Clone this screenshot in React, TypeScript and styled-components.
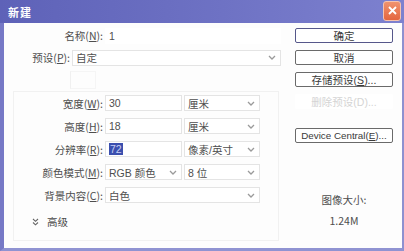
import React from "react";
import styled, { createGlobalStyle } from "styled-components";

const GlobalStyle = createGlobalStyle`
  html, body { margin: 0; padding: 0; background: #fff; }
  body {
    font-family: "Liberation Sans", "Noto Sans CJK SC", sans-serif;
    font-size: 11px;
    color: #4a4a4a;
  }
`;

const Window = styled.div`
  width: 404px;
  height: 251px;
  display: flex;
  flex-direction: column;
  box-sizing: border-box;
  overflow: hidden;
`;

const TitleBar = styled.div`
  height: 23px;
  flex: none;
  display: flex;
  align-items: center;
  justify-content: space-between;
  padding: 0 3px 0 8px;
  background: linear-gradient(90deg, #5e62b8 0%, #6e72c4 55%, #7d81cf 100%);
`;

const Title = styled.span`
  color: #fff;
  font-weight: bold;
  font-size: 11px;
  letter-spacing: 1px;
  font-family: "Noto Sans CJK SC", sans-serif;
`;

const CloseButton = styled.div`
  width: 16px;
  height: 18px;
  border-radius: 3px;
  background: linear-gradient(180deg, #f0936e 0%, #e4663f 100%);
  border: 1px solid #f6c3ae;
  display: flex;
  align-items: center;
  justify-content: center;
  margin-top: -2px;
`;

const Body = styled.div`
  flex: 1;
  display: flex;
  background: #fdfdfd;
  border-left: 4px solid #7679c6;
  border-right: 2px solid #8e91d0;
  border-bottom: 3px solid #9093d2;
`;

const LeftPane = styled.div`
  width: 277px;
  display: flex;
  flex-direction: column;
  padding-top: 4px;
`;

const RightPane = styled.div`
  flex: 1;
  display: flex;
  flex-direction: column;
  padding: 5px 0 0 14px;
`;

const TopRow = styled.div<{ $labelWidth: number }>`
  display: grid;
  grid-template-columns: ${(p) => p.$labelWidth}px 1fr;
  column-gap: 2px;
  align-items: center;
  height: 17px;
  margin-bottom: 5px;
`;

const Label = styled.span`
  text-align: right;
  white-space: nowrap;
  font-family: "Noto Sans CJK SC", sans-serif;
  font-size: 10.5px;
  color: #4e4e4e;
`;

const Key = styled.span`
  text-decoration: underline;
`;

const Field = styled.div<{ $bordered?: boolean }>`
  height: 16px;
  box-sizing: border-box;
  display: flex;
  align-items: center;
  justify-content: space-between;
  padding: 0 4px 0 3px;
  border: 1px solid ${(p) => (p.$bordered ? "#e4e4e4" : "transparent")};
  background: #fff;
  font-family: "Liberation Sans", "Noto Sans CJK SC", sans-serif;
  font-size: 10.5px;
  color: #4e4e4e;
  white-space: nowrap;
`;

const GhostRow = styled.div`
  height: 18px;
  display: flex;
  margin: 0 0 0 66px;
`;

const GhostBox = styled.div`
  width: 24px;
  height: 16px;
  border: 1px solid #f5f5f5;
  border-left-color: #f0f0f0;
`;

const GroupBox = styled.div`
  margin: 2px 0 0 9px;
  width: 266px;
  height: 150px;
  box-sizing: border-box;
  border: 1px solid #f1f1f1;
  padding-top: 3px;
  display: flex;
  flex-direction: column;
`;

const GroupGrid = styled.div`
  display: grid;
  grid-template-columns: 89px 77px 76px;
  column-gap: 2px;
  row-gap: 7px;
  align-items: center;
`;

const Wide = styled(Field)`
  grid-column: 2 / span 2;
`;

const Highlight = styled.span`
  background: #3b4fae;
  color: #c9cff5;
  padding: 0 1px;
`;

const Advanced = styled.div`
  display: flex;
  align-items: center;
  gap: 8px;
  margin: 11px 0 0 18px;
  font-family: "Noto Sans CJK SC", sans-serif;
  font-size: 10.5px;
`;

const Button = styled.div<{ $default?: boolean; $disabled?: boolean; $small?: boolean }>`
  width: 98px;
  height: 15px;
  box-sizing: border-box;
  display: flex;
  align-items: center;
  justify-content: center;
  border: 1px solid ${(p) => (p.$disabled ? "transparent" : p.$default ? "#55578a" : "#6a6a6a")};
  border-radius: 2px;
  background: #fff;
  color: ${(p) => (p.$disabled ? "#d4d4d4" : "#3a3a3a")};
  font-family: "Liberation Sans", "Noto Sans CJK SC", sans-serif;
  font-size: ${(p) => (p.$small ? 9.8 : 10.5)}px;
  white-space: nowrap;
  overflow: hidden;
  margin-bottom: 7px;
`;

const Spacer = styled.div<{ $h: number }>`
  height: ${(p) => p.$h}px;
`;

const SizeInfo = styled.div`
  display: flex;
  flex-direction: column;
  align-items: center;
  width: 98px;
  gap: 6px;
  font-family: "Noto Sans CJK SC", sans-serif;
  font-size: 10.5px;
  color: #4e4e4e;
`;

const Chevron = () => (
  <svg width="8" height="5" viewBox="0 0 8 5">
    <path d="M1 1 L4 4 L7 1" fill="none" stroke="#9a9a9a" strokeWidth="1.3" />
  </svg>
);

const DoubleChevron = () => (
  <svg width="7" height="8" viewBox="0 0 7 8">
    <path d="M1 1 L3.5 3.3 L6 1 M1 4.5 L3.5 6.8 L6 4.5" fill="none" stroke="#666" strokeWidth="1.1" />
  </svg>
);

const Select = ({ children, wide }: { children?: React.ReactNode; wide?: boolean }) => {
  const Box = wide ? Wide : Field;
  return (
    <Box $bordered>
      <span>{children}</span>
      <Chevron />
    </Box>
  );
};

export default function App() {
  return (
    <Window>
      <GlobalStyle />
      <TitleBar>
        <Title>新建</Title>
        <CloseButton>
          <svg width="9" height="9" viewBox="0 0 9 9">
            <path d="M1 1 L8 8 M8 1 L1 8" stroke="#fff" strokeWidth="1.8" />
          </svg>
        </CloseButton>
      </TitleBar>
      <Body>
        <LeftPane>
          <TopRow $labelWidth={99}>
            <Label>
              名称(<Key>N</Key>):
            </Label>
            <Field>1</Field>
          </TopRow>
          <TopRow $labelWidth={66}>
            <Label>
              预设(<Key>P</Key>):
            </Label>
            <Field $bordered>
              <span>自定</span>
              <Chevron />
            </Field>
          </TopRow>
          <GhostRow>
            <GhostBox />
          </GhostRow>
          <GroupBox>
            <GroupGrid>
              <Label>
                宽度(<Key>W</Key>):
              </Label>
              <Field $bordered>30</Field>
              <Select>厘米</Select>

              <Label>
                高度(<Key>H</Key>):
              </Label>
              <Field $bordered>18</Field>
              <Select>厘米</Select>

              <Label>
                分辨率(<Key>R</Key>):
              </Label>
              <Field $bordered>
                <Highlight>72</Highlight>
              </Field>
              <Select>像素/英寸</Select>

              <Label>
                颜色模式(<Key>M</Key>):
              </Label>
              <Select>RGB 颜色</Select>
              <Select>8 位</Select>

              <Label>
                背景内容(<Key>C</Key>):
              </Label>
              <Select wide>白色</Select>
            </GroupGrid>
            <Advanced>
              <DoubleChevron />
              <span>高级</span>
            </Advanced>
          </GroupBox>
        </LeftPane>
        <RightPane>
          <Button $default>确定</Button>
          <Button>取消</Button>
          <Button>
            存储预设(<Key>S</Key>)...
          </Button>
          <Button $disabled>删除预设(D)...</Button>
          <Spacer $h={12} />
          <Button $small>
            Device Central(<Key>E</Key>)...
          </Button>
          <Spacer $h={42} />
          <SizeInfo>
            <span>图像大小:</span>
            <span>1.24M</span>
          </SizeInfo>
        </RightPane>
      </Body>
    </Window>
  );
}
